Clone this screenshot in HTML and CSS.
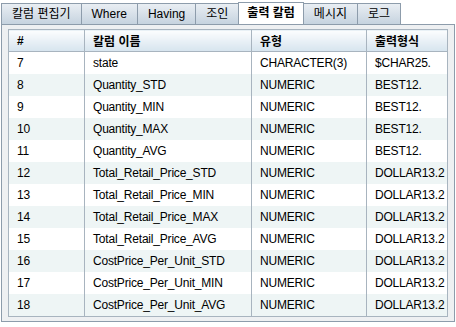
FILE: index.html
```html
<!DOCTYPE html>
<html lang="ko">
<head>
    <meta charset="UTF-8">
    <title>출력 칼럼</title>
    <link rel="stylesheet" href="styles.css">
</head>
<body>
    <div class="tabs">
        <div class="tab">칼럼 편집기</div>
        <div class="tab">Where</div>
        <div class="tab">Having</div>
        <div class="tab">조인</div>
        <div class="tab active">출력 칼럼</div>
        <div class="tab">메시지</div>
        <div class="tab">로그</div>
    </div>

    <div class="panel">
        <table class="grid">
            <thead>
                <tr>
                    <th class="c-num">#</th>
                    <th class="c-name">칼럼 이름</th>
                    <th class="c-type">유형</th>
                    <th class="c-fmt">출력형식</th>
                </tr>
            </thead>
            <tbody id="rows"></tbody>
        </table>
    </div>

    <script>
        const rows = [
            [7, "state", "CHARACTER(3)", "$CHAR25."],
            [8, "Quantity_STD", "NUMERIC", "BEST12."],
            [9, "Quantity_MIN", "NUMERIC", "BEST12."],
            [10, "Quantity_MAX", "NUMERIC", "BEST12."],
            [11, "Quantity_AVG", "NUMERIC", "BEST12."],
            [12, "Total_Retail_Price_STD", "NUMERIC", "DOLLAR13.2"],
            [13, "Total_Retail_Price_MIN", "NUMERIC", "DOLLAR13.2"],
            [14, "Total_Retail_Price_MAX", "NUMERIC", "DOLLAR13.2"],
            [15, "Total_Retail_Price_AVG", "NUMERIC", "DOLLAR13.2"],
            [16, "CostPrice_Per_Unit_STD", "NUMERIC", "DOLLAR13.2"],
            [17, "CostPrice_Per_Unit_MIN", "NUMERIC", "DOLLAR13.2"],
            [18, "CostPrice_Per_Unit_AVG", "NUMERIC", "DOLLAR13.2"]
        ];

        const body = document.getElementById('rows');
        rows.forEach(row => {
            const tr = document.createElement('tr');
            row.forEach(value => {
                const td = document.createElement('td');
                td.textContent = value;
                tr.appendChild(td);
            });
            body.appendChild(tr);
        });
    </script>
</body>
</html>
```

FILE: styles.css
```css
body {
    margin: 0;
    background: #fff;
    font-family: "Liberation Sans", "Noto Sans CJK KR", sans-serif;
    font-size: 12px;
    color: #000;
}

.tabs {
    display: flex;
    padding: 3px 0 0 1px;
    height: 21px;
}

.tab {
    height: 20px;
    line-height: 20px;
    padding: 0 10px 0 10px;
    margin-right: -1px;
    border: 1px solid #8d9cab;
    border-bottom: none;
    background: linear-gradient(#e9eef3, #c6d3df);
    white-space: nowrap;
}

.tab.active {
    position: relative;
    height: 21px;
    margin-top: -1px;
    padding: 0 8px;
    background: #fff;
    font-weight: bold;
    z-index: 1;
}

.panel {
    width: 440px;
    height: 288px;
    margin-left: 1px;
    padding: 4px 6px;
    border: 1px solid #8d9cab;
    background: #eef0f2;
}

.grid {
    width: 440px;
    border-collapse: collapse;
    table-layout: fixed;
    background: #fff;
    border: 1px solid #a8b4bf;
}

.grid th,
.grid td {
    height: 22px;
    padding: 0 0 0 8px;
    text-align: left;
    border-left: 1px solid #a8b4bf;
    white-space: nowrap;
    overflow: hidden;
}

.grid td {
    letter-spacing: -0.2px;
}

.grid th {
    height: 21px;
    font-weight: bold;
    background: linear-gradient(#fcfdfe, #d6e4ee);
    border-bottom: 1px solid #a8b4bf;
}

.grid tbody tr:nth-child(even) td {
    background: #eef5f5;
}

.c-num { width: 67px; }
.c-name { width: 158px; }
.c-type { width: 106px; }
```
